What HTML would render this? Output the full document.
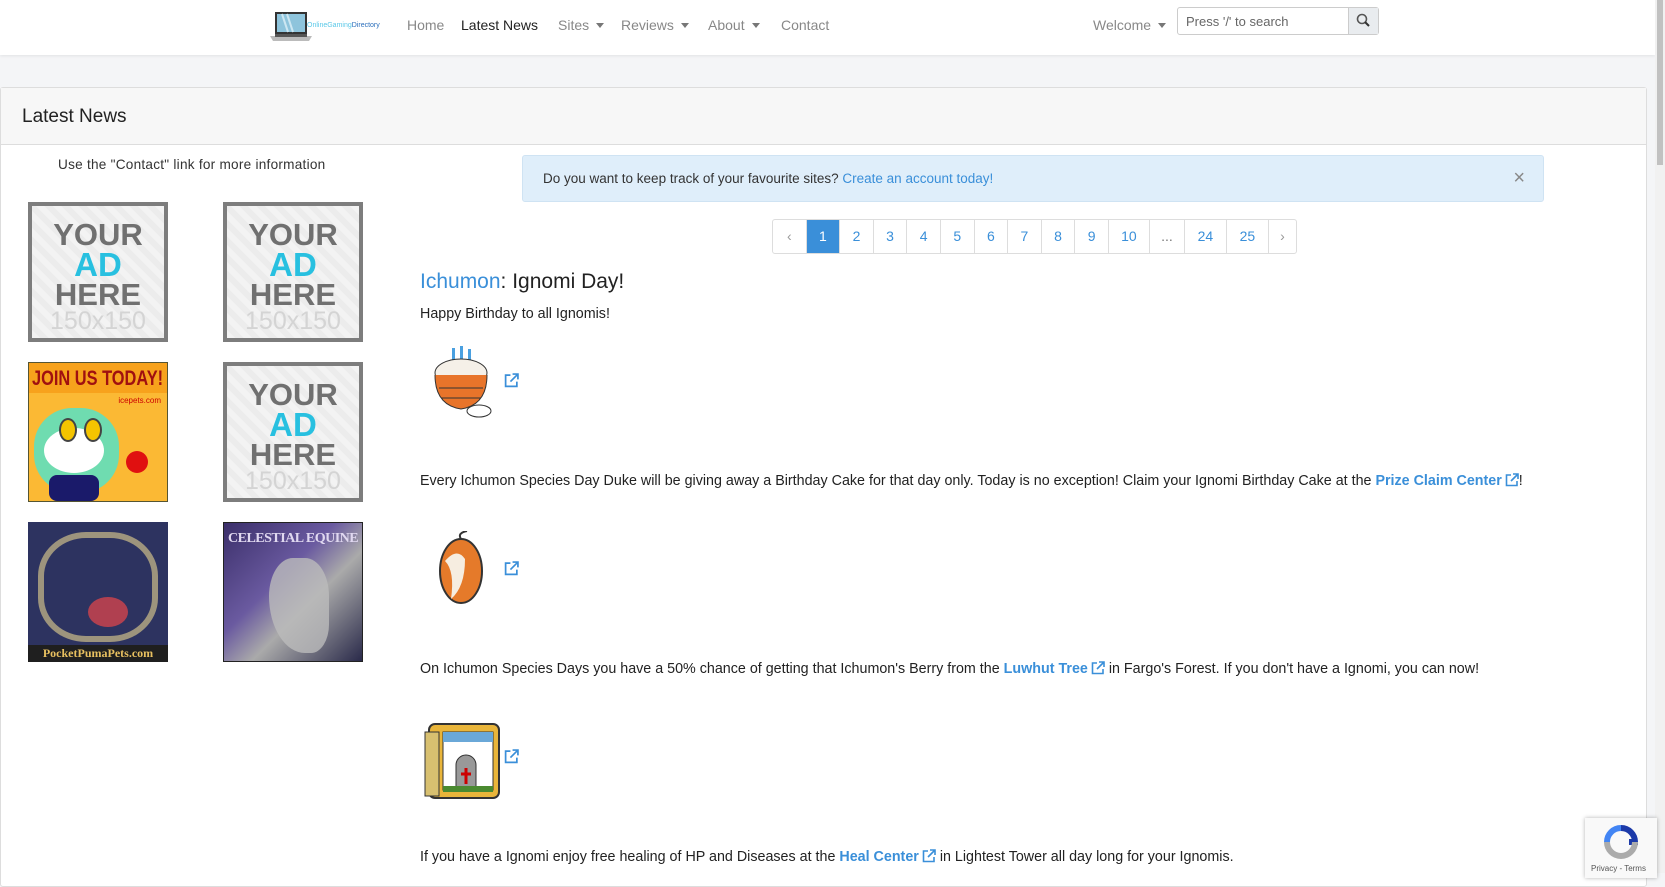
<!DOCTYPE html>
<html><head><meta charset="utf-8"><style>
*{box-sizing:border-box;margin:0;padding:0}
body{width:1665px;height:873px;overflow:hidden;background:#f4f5f7;font-family:"Liberation Sans",sans-serif;color:#212529;position:relative}
.nav{position:absolute;left:0;top:0;width:1655px;height:55px;background:#fff;box-shadow:0 1px 3px rgba(0,0,0,.08)}
.nav a{position:absolute;top:17px;font-size:14px;color:#888;text-decoration:none;white-space:nowrap}
.caret{display:inline-block;width:0;height:0;border-left:4px solid transparent;border-right:4px solid transparent;border-top:5px solid #777;margin-left:7px;vertical-align:2px}
.search{position:absolute;left:1177px;top:7px;width:202px;height:28px;border:1px solid #ccc;border-radius:3px;background:#fff}
.search span{position:absolute;left:8px;top:6px;font-size:13px;color:#666}
.search i{position:absolute;right:0;top:0;width:30px;height:26px;background:#e9ecef;border-left:1px solid #ccc}
.scroll{position:absolute;right:0;top:0;width:10px;height:873px;background:#f1f1f1}
.scroll div{position:absolute;left:2px;top:0;width:6px;height:165px;background:#c1c1c1}
.card{position:absolute;left:0;top:87px;width:1647px;height:800px;background:#fff;border:1px solid #ddd;border-radius:3px}
.chead{height:57px;background:#f7f7f7;border-bottom:1px solid #ddd;padding:18px 21px;font-size:19px;color:#222}
.note{position:absolute;left:57px;top:69px;font-size:13.6px;color:#333;letter-spacing:.25px}
.ad{position:absolute;width:140px;height:140px}
.ph{border:4px solid #7d7d7d;background:repeating-linear-gradient(45deg,#f3f3f3 0 6px,#ececec 6px 12px);text-align:center;font-weight:bold;line-height:.84}
.ph b{display:block;font-size:31px;color:#707070;margin-bottom:3px}
.ph .a{color:#28c0e0;font-size:33px}
.ph .s{color:#d4d4d4;font-size:25px;font-weight:normal}
.alert{position:absolute;left:521px;top:67px;width:1022px;height:47px;background:#dfeefa;border:1px solid #cfe3f3;border-radius:3px;padding:15px 20px;font-size:13.5px;color:#333}
.alert a{color:#3a8fd9;text-decoration:none}
.alert .x{position:absolute;right:18px;top:11px;font-size:20px;color:#888}
.pag{position:absolute;left:771px;top:131px;height:35px;display:flex;border:1px solid #ddd;border-radius:3px;overflow:hidden}
.pag span{height:33px;line-height:33px;text-align:center;font-size:14px;color:#3a8fd9;border-right:1px solid #ddd;width:33.6px}
.pag span:last-child{border-right:0}
.pag .on{background:#3a8fd9;color:#fff}
.main{position:absolute;left:419px;font-size:14.3px;color:#222;white-space:nowrap}
.main a{color:#3a8fd9;text-decoration:none}
.main b a{font-weight:bold}
.ext{display:inline-block;vertical-align:-2px;margin-left:3px}
.lk{position:absolute;left:503px}
</style></head><body>
<svg width="0" height="0" style="position:absolute"><defs><symbol id="ex" viewBox="0 0 14 14"><path d="M6 2H1.5v10.5H12V8" fill="none" stroke="#3a8fd9" stroke-width="1.6"/><path d="M8 1h5v5M13 1L6 8" fill="none" stroke="#3a8fd9" stroke-width="1.6"/></symbol></defs></svg>
<div class="nav">
  <svg style="position:absolute;left:270px;top:11px" width="42" height="32"><rect x="5" y="1" width="32" height="22" fill="#333"/><rect x="7" y="3" width="28" height="18" fill="#8ec4dc"/><path d="M12 3l6 18M17 3l6 18" stroke="#cde7f2" stroke-width="2"/><path d="M0 25h42l-3 5H3z" fill="#bbb"/><rect x="5" y="23" width="32" height="3" fill="#555"/></svg>
  <span style="position:absolute;left:307px;top:22px;font-size:7px;color:#5ac8e8">OnlineGaming<span style="color:#2a6ebb">Directory</span></span>
  <a style="left:407px">Home</a>
  <a style="left:461px;color:#222">Latest News</a>
  <a style="left:558px">Sites<i class="caret"></i></a>
  <a style="left:621px">Reviews<i class="caret"></i></a>
  <a style="left:708px">About<i class="caret"></i></a>
  <a style="left:781px">Contact</a>
  <a style="left:1093px">Welcome<i class="caret"></i></a>
  <div class="search"><span>Press '/' to search</span><i><svg width="30" height="26"><circle cx="13" cy="11" r="4.5" fill="none" stroke="#555" stroke-width="1.6"/><path d="M16 14l4 4" stroke="#333" stroke-width="2"/></svg></i></div>
</div>
<div class="scroll"><div></div></div>
<div class="card">
  <div class="chead">Latest News</div>
  <div class="note">Use the "Contact" link for more information</div>
  <div class="ad ph" style="left:27px;top:114px;padding-top:16px"><b>YOUR</b><b class="a">AD</b><b>HERE</b><b class="s">150x150</b></div>
  <div class="ad ph" style="left:222px;top:114px;padding-top:16px"><b>YOUR</b><b class="a">AD</b><b>HERE</b><b class="s">150x150</b></div>
  <div class="ad" style="left:27px;top:274px;background:linear-gradient(#f7a21c 0 30px,#fbb934 30px);border:1px solid #553;overflow:hidden">
    <div style="position:absolute;left:3px;top:4px;font:bold 21px 'Liberation Sans Narrow','Liberation Sans',sans-serif;color:#a01010;white-space:nowrap;transform:scaleX(.78);transform-origin:left">JOIN US TODAY!</div>
    <div style="position:absolute;right:6px;top:33px;font-size:8px;color:#c00">icepets.com</div>
    <div style="position:absolute;left:5px;top:45px;width:85px;height:85px;border-radius:45%;background:#6fdcb0"></div>
    <div style="position:absolute;left:15px;top:65px;width:60px;height:45px;border-radius:50%;background:#fff"></div>
    <div style="position:absolute;left:30px;top:55px;width:18px;height:24px;border-radius:50%;background:#f5c400;border:2px solid #444"></div>
    <div style="position:absolute;left:55px;top:55px;width:18px;height:24px;border-radius:50%;background:#f5c400;border:2px solid #444"></div>
    <div style="position:absolute;left:97px;top:88px;width:22px;height:22px;border-radius:50%;background:#e01010"></div>
    <div style="position:absolute;left:20px;top:112px;width:50px;height:26px;background:#1a1a6a;border-radius:8px"></div>
  </div>
  <div class="ad ph" style="left:222px;top:274px;padding-top:16px"><b>YOUR</b><b class="a">AD</b><b>HERE</b><b class="s">150x150</b></div>
  <div class="ad" style="left:27px;top:434px;background:#2d3360;overflow:hidden">
    <div style="position:absolute;left:10px;top:10px;width:120px;height:110px;border:6px solid #b9ad85;border-radius:40%;opacity:.8"></div>
    <div style="position:absolute;left:60px;top:75px;width:40px;height:30px;background:#b04050;border-radius:50%"></div>
    <div style="position:absolute;left:0;bottom:0;width:140px;height:17px;background:#1f1f1f;color:#e8c060;font:bold 12px 'Liberation Serif',serif;text-align:center;line-height:17px">PocketPumaPets.com</div>
  </div>
  <div class="ad" style="left:222px;top:434px;border:1px solid #222;background:linear-gradient(135deg,#3b2f6a,#6a5aa0 40%,#aaa 60%,#2a2a4a);overflow:hidden">
    <div style="position:absolute;left:4px;top:8px;font:bold 14px 'Liberation Serif',serif;color:#e0d8f0;letter-spacing:-.5px">CELESTIAL EQUINE</div>
    <div style="position:absolute;left:45px;top:35px;width:60px;height:95px;background:#bbb;border-radius:40% 40% 30% 60%;opacity:.8"></div>
  </div>
  <div class="alert">Do you want to keep track of your favourite sites? <a>Create an account today!</a><span class="x">×</span></div>
  <div class="pag"><span style="color:#999">‹</span><span class="on">1</span><span>2</span><span>3</span><span>4</span><span>5</span><span>6</span><span>7</span><span>8</span><span>9</span><span style="width:41px">10</span><span style="width:35px;color:#777">...</span><span style="width:42px">24</span><span style="width:42px">25</span><span style="color:#999;width:27px">›</span></div>
  <div class="main" style="top:182px;font-size:21px"><a>Ichumon</a>: Ignomi Day!</div>
  <div class="main" style="top:218px">Happy Birthday to all Ignomis!</div>
  <svg style="position:absolute;left:423px;top:255px" width="72" height="78"><rect x="28" y="5" width="3" height="14" fill="#4aa0e0"/><rect x="36" y="3" width="3" height="16" fill="#4aa0e0"/><rect x="44" y="6" width="3" height="14" fill="#4aa0e0"/><ellipse cx="37" cy="30" rx="26" ry="14" fill="#f5f0e8" stroke="#333"/><path d="M11 32q0 30 26 34q26-4 26-34" fill="#e8742a" stroke="#333"/><path d="M15 45h44M17 55h40" stroke="#333"/><ellipse cx="55" cy="68" rx="12" ry="6" fill="#fff" stroke="#333"/></svg>
  <svg class="lk" style="top:285px" width="15" height="15"><use href="#ex"/></svg>
  <div class="main" style="top:385px">Every Ichumon Species Day Duke will be giving away a Birthday Cake for that day only. Today is no exception! Claim your Ignomi Birthday Cake at the <b><a>Prize Claim Center</a></b><svg class="ext" width="14" height="14"><use href="#ex"/></svg>!</div>
  <svg style="position:absolute;left:430px;top:443px" width="60" height="80"><path d="M30 8q-4-6 6-8" stroke="#333" fill="none" stroke-width="2"/><ellipse cx="30" cy="40" rx="21" ry="32" fill="#e57a2a" stroke="#333" stroke-width="2"/><path d="M14 30q10 10 6 38q14-12 14-40q-8-12-20 2" fill="#f6ede0"/></svg>
  <svg class="lk" style="top:473px" width="15" height="15"><use href="#ex"/></svg>
  <div class="main" style="top:573px">On Ichumon Species Days you have a 50% chance of getting that Ichumon's Berry from the <b><a>Luwhut Tree</a></b><svg class="ext" width="14" height="14"><use href="#ex"/></svg> in Fargo's Forest. If you don't have a Ignomi, you can now!</div>
  <svg style="position:absolute;left:420px;top:632px" width="80" height="80"><rect x="8" y="4" width="70" height="74" rx="6" fill="#e9b53a" stroke="#333" stroke-width="2"/><rect x="22" y="12" width="50" height="58" fill="#fff" stroke="#333"/><rect x="22" y="12" width="50" height="10" fill="#6aa8d8"/><path d="M35 70V45a10 10 0 0 1 20 0v25z" fill="#999" stroke="#333"/><path d="M45 48v16M40 54h10" stroke="#c00" stroke-width="3"/><rect x="4" y="12" width="14" height="64" fill="#d8c070" stroke="#333"/><path d="M22 66h50v6H22z" fill="#4a8a30"/></svg>
  <svg class="lk" style="top:661px" width="15" height="15"><use href="#ex"/></svg>
  <div class="main" style="top:761px">If you have a Ignomi enjoy free healing of HP and Diseases at the <b><a>Heal Center</a></b><svg class="ext" width="14" height="14"><use href="#ex"/></svg> in Lightest Tower all day long for your Ignomis.</div>
</div>
<div style="position:absolute;left:1585px;top:818px;width:72px;height:60px;background:#f9f9f9;box-shadow:0 0 4px rgba(0,0,0,.3)">
  <svg style="position:absolute;left:18px;top:6px" width="36" height="36"><path d="M18 4a14 14 0 0 1 14 14h-6" stroke="#1c3aa9" stroke-width="6" fill="none"/><path d="M4 18a14 14 0 0 1 14-14" stroke="#4285f4" stroke-width="6" fill="none"/><path d="M32 18a14 14 0 0 1-28 0" stroke="#ababab" stroke-width="6" fill="none"/></svg>
  <div style="position:absolute;left:6px;top:46px;font-size:8px;color:#555">Privacy - Terms</div>
</div>
</body></html>
